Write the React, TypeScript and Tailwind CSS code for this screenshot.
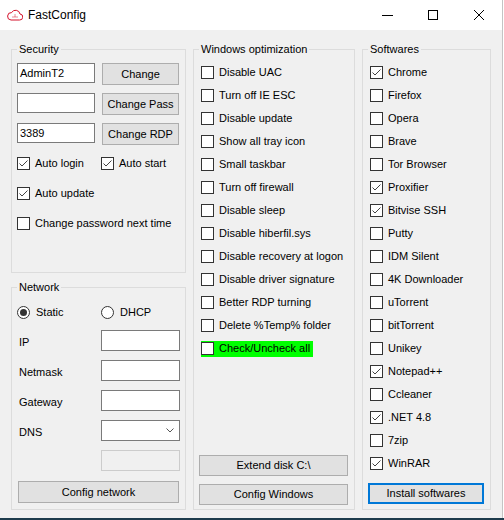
import React from "react";

const Check = ({ checked = false, label, bg }: { checked?: boolean; label: string; bg?: string }) => (
  <div className={`flex items-center h-[16px] ${bg ?? ""}`}>
    <span className="w-[13px] h-[13px] shrink-0 bg-white border border-[#333333] flex items-center justify-center">
      {checked && (
        <svg width="11" height="11" viewBox="0 0 11 11">
          <polyline points="1.5,5.5 4,8 9.5,2.5" fill="none" stroke="#444444" strokeWidth="1" />
        </svg>
      )}
    </span>
    <span className="ml-[5px] leading-[13px] whitespace-nowrap">{label}</span>
  </div>
);

const Radio = ({ checked = false, label }: { checked?: boolean; label: string }) => (
  <div className="flex items-center h-[13px]">
    <span className="w-[13px] h-[13px] rounded-full bg-white border border-[#333333] flex items-center justify-center">
      {checked && <span className="w-[7px] h-[7px] rounded-full bg-[#333333]" />}
    </span>
    <span className="ml-[6px] leading-[13px]">{label}</span>
  </div>
);

const Btn = ({
  children,
  className = "",
  focused = false,
}: {
  children: React.ReactNode;
  className?: string;
  focused?: boolean;
}) => (
  <div
    className={`bg-[#e1e1e1] flex items-center justify-center leading-[13px] ${
      focused ? "border-2 border-[#0078d7]" : "border border-[#adadad]"
    } ${className}`}
  >
    {children}
  </div>
);

const TextBox = ({ value = "", className = "" }: { value?: string; className?: string }) => (
  <div className={`bg-white border border-[#7a7a7a] flex items-center pl-[2px] leading-[13px] ${className}`}>
    {value}
  </div>
);

const Group = ({
  title,
  className = "",
  children,
}: {
  title: string;
  className?: string;
  children: React.ReactNode;
}) => (
  <div className={`relative border border-[#dcdcdc] flex flex-col ${className}`}>
    <span className="absolute -top-[8px] left-[5px] px-[2px] bg-[#f0f0f0] leading-[14px]">{title}</span>
    {children}
  </div>
);

const winOpts = [
  "Disable UAC",
  "Turn off IE ESC",
  "Disable update",
  "Show all tray icon",
  "Small taskbar",
  "Turn off firewall",
  "Disable sleep",
  "Disable hiberfil.sys",
  "Disable recovery at logon",
  "Disable driver signature",
  "Better RDP turning",
  "Delete %Temp% folder",
];

const softwares: [string, boolean][] = [
  ["Chrome", true],
  ["Firefox", false],
  ["Opera", false],
  ["Brave", false],
  ["Tor Browser", false],
  ["Proxifier", true],
  ["Bitvise SSH", true],
  ["Putty", false],
  ["IDM Silent", false],
  ["4K Downloader", false],
  ["uTorrent", false],
  ["bitTorrent", false],
  ["Unikey", false],
  ["Notepad++", true],
  ["Ccleaner", false],
  [".NET 4.8", true],
  ["7zip", false],
  ["WinRAR", true],
];

export default function App() {
  return (
    <div className="w-[504px] h-[520px] bg-white flex flex-col font-['Liberation_Sans',Arial,sans-serif] text-[11px] text-black overflow-hidden">
      <div className="w-[503px] flex-1 flex flex-col border-r border-[#c4c4c4] bg-[#f0f0f0]">
        {/* title bar */}
        <div className="h-[30px] bg-white flex items-center shrink-0">
          <svg className="ml-[7px]" width="16" height="12" viewBox="0 0 16 12">
            <path
              d="M4 11 H12.5 A3 3 0 0 0 13 5 A4.5 4.5 0 0 0 4.6 3.6 A3.6 3.6 0 0 0 4 11 Z"
              fill="none"
              stroke="#d4102a"
              strokeWidth="1"
            />
            <path d="M5.5 8 H10.5 M8 5.5 V8" stroke="#d4102a" strokeWidth="1" strokeDasharray="1 1" />
          </svg>
          <span className="ml-[5px] text-[12px] leading-[16px]">FastConfig</span>
          <div className="ml-auto flex h-full">
            <div className="w-[46px] flex items-center justify-center">
              <span className="w-[11px] h-px bg-black" />
            </div>
            <div className="w-[46px] flex items-center justify-center">
              <span className="w-[10px] h-[10px] border border-black" />
            </div>
            <div className="w-[46px] flex items-center justify-center">
              <svg width="10" height="10" viewBox="0 0 10 10">
                <path d="M0 0 L10 10 M10 0 L0 10" stroke="#000" strokeWidth="1" />
              </svg>
            </div>
          </div>
        </div>

        {/* body */}
        <div className="flex pt-[19px] pl-[11px] gap-[7px]">
          <div className="w-[175px] h-[461px] flex flex-col gap-[14px]">
            <Group title="Security" className="h-[224px] pl-[5px] pt-[13px]">
              <div className="flex flex-col gap-[8px]">
                <div className="flex gap-[7px] items-start">
                  <TextBox value="AdminT2" className="w-[78px] h-[20px]" />
                  <Btn className="w-[77px] h-[22px]">Change</Btn>
                </div>
                <div className="flex gap-[7px] items-start">
                  <TextBox className="w-[78px] h-[20px]" />
                  <Btn className="w-[77px] h-[22px]">Change Pass</Btn>
                </div>
                <div className="flex gap-[7px] items-start">
                  <TextBox value="3389" className="w-[78px] h-[20px]" />
                  <Btn className="w-[77px] h-[22px]">Change RDP</Btn>
                </div>
              </div>
              <div className="flex flex-col mt-[10px] gap-[14px]">
                <div className="flex">
                  <div className="w-[84px]">
                    <Check checked label="Auto login" />
                  </div>
                  <Check checked label="Auto start" />
                </div>
                <Check checked label="Auto update" />
                <Check label="Change password next time" />
              </div>
            </Group>

            <Group title="Network" className="flex-1 pl-[5px] pt-[18px]">
              <div className="flex">
                <div className="w-[84px]">
                  <Radio checked label="Static" />
                </div>
                <Radio label="DHCP" />
              </div>
              <div className="flex flex-col gap-[9px] mt-[11px]">
                {["IP", "Netmask", "Gateway"].map((l) => (
                  <div key={l} className="flex items-center">
                    <span className="w-[84px] pl-[2px] pt-[3px]">{l}</span>
                    <TextBox className="w-[79px] h-[21px]" />
                  </div>
                ))}
                <div className="flex items-center">
                  <span className="w-[84px] pl-[2px] pt-[3px]">DNS</span>
                  <div className="w-[79px] h-[21px] bg-white border border-[#7a7a7a] flex items-center justify-end pr-[5px]">
                    <svg width="8" height="5" viewBox="0 0 8 5">
                      <polyline points="0.5,0.5 4,4 7.5,0.5" fill="none" stroke="#555" strokeWidth="1" />
                    </svg>
                  </div>
                </div>
                <div className="flex items-center">
                  <span className="w-[84px]" />
                  <div className="w-[79px] h-[21px] bg-[#f0f0f0] border border-[#cccccc]" />
                </div>
              </div>
              <Btn className="w-[161px] h-[22px] ml-px mt-[10px]">Config network</Btn>
            </Group>
          </div>

          <Group title="Windows optimization" className="w-[162px] h-[461px] pl-[5px] pt-[11px] pb-[4px]">
            <div className="flex flex-col pl-[2px]">
              {winOpts.map((o) => (
                <div key={o} className="h-[23px] flex items-center">
                  <Check label={o} />
                </div>
              ))}
              <div className="h-[23px] flex items-center">
                <div className="w-[112px]">
                  <Check label="Check/Uncheck all" bg="bg-[#00ff00]" />
                </div>
              </div>
            </div>
            <div className="mt-auto flex flex-col gap-[8px]">
              <Btn className="w-[149px] h-[21px]">Extend disk C:\</Btn>
              <Btn className="w-[149px] h-[21px]">Config Windows</Btn>
            </div>
          </Group>

          <Group title="Softwares" className="w-[129px] h-[461px] pl-[5px] pt-[11px] pb-[5px]">
            <div className="flex flex-col pl-[2px]">
              {softwares.map(([s, c]) => (
                <div key={s} className="h-[23px] flex items-center">
                  <Check checked={c} label={s} />
                </div>
              ))}
            </div>
            <Btn focused className="mt-auto w-[116px] h-[21px]">
              Install softwares
            </Btn>
          </Group>
        </div>
      </div>
      <div className="h-[2px] bg-[#1d3b4c] shrink-0" />
    </div>
  );
}
